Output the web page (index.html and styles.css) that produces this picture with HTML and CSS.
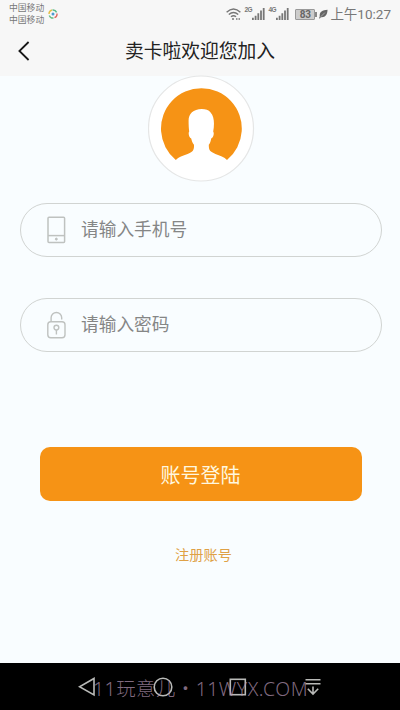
FILE: index.html
```html
<!DOCTYPE html>
<html lang="zh-CN">
<head>
<meta charset="utf-8">
<title>卖卡啦欢迎您加入</title>
<link rel="stylesheet" href="styles.css">
</head>
<body>
<div class="screen">
  <header class="header">
    <div class="status">
      <div class="carriers"><span>中国移动</span><span>中国移动</span></div>
      <svg class="app-dot" width="10" height="10" viewBox="0 0 10 10" fill="none" stroke-width="1.4">
        <path d="M1 5A4 4 0 0 1 4 1" stroke="#e3c04c"/><path d="M4.5 1A4 4 0 0 1 8.6 3.4" stroke="#59b98a"/>
        <path d="M9 4.5A4 4 0 0 1 6.5 8.7" stroke="#df6b62"/><path d="M5.5 9A4 4 0 0 1 1.3 6.4" stroke="#6bbf87"/>
        <circle cx="5" cy="5" r="1.5" fill="#4b9bd0"/>
      </svg>
      <div class="indicators">
        <svg class="wifi" width="15" height="12" viewBox="0 0 15 12" fill="none" stroke="#777" stroke-width="1.4">
          <path d="M.6 4.2Q7.5-2.4 14.4 4.2M2.8 6.6Q7.5 2.2 12.2 6.6M5 8.8Q7.5 6.6 10 8.8"/><path d="M6 11h2M10 11h1.5M12.5 11H14" stroke-width="1.6"/>
        </svg>
        <span class="net">2G</span>
        <svg class="bars" width="13" height="12" viewBox="0 0 13 11" preserveAspectRatio="none" fill="#777"><path d="M0 9h1.8v2H0zM2.7 7h1.8v4H2.7zM5.4 4.8h1.8V11H5.4zM8.1 2.4h1.8V11H8.1zM10.8 0h1.8v11h-1.8z"/></svg>
        <span class="net net-second">4G</span>
        <svg class="bars" width="13" height="12" viewBox="0 0 13 11" preserveAspectRatio="none" fill="#777"><path d="M0 9h1.8v2H0zM2.7 7h1.8v4H2.7zM5.4 4.8h1.8V11H5.4zM8.1 2.4h1.8V11H8.1zM10.8 0h1.8v11h-1.8z"/></svg>
        <span class="battery">83</span>
        <svg class="leaf" width="9" height="10" viewBox="0 0 10 11"><path d="M9.5.8C4 1 .2 3.2.8 8.2L0 10.2l1 .4 1-1.6C7 9.6 9.2 6.5 9.5.8Z" fill="#666"/><path d="M2 8.5 6.5 4" stroke="#ddd" stroke-width=".6"/></svg>
        <span class="clock">上午10:27</span>
      </div>
    </div>
    <div class="titlebar">
      <svg class="back" width="12" height="20" viewBox="0 0 12 20" fill="none" stroke="#171717" stroke-width="1.8"><path d="M10.6 1 1.4 10l9.2 9"/></svg>
      <h1 class="title">卖卡啦欢迎您加入</h1>
    </div>
  </header>

  <main class="content">
    <svg class="avatar" width="107" height="107" viewBox="0 0 107 107">
      <circle cx="53" cy="53.5" r="52.5" fill="#fff" stroke="#e5e6e6" stroke-width="1.2"/>
      <path d="M27.8 84.9A40.4 40.4 0 1 1 79 84.9C76.4 82.2 71.8 80.8 67.4 79C62 76.8 60.7 75.4 60.8 69.8C62.2 67.8 62.8 66 63.2 63.4C65.6 62.6 66.4 58 65.2 56.4C66.4 50 66.6 41.6 62.6 37.4C60.8 34.8 57.4 33.9 53.8 33.9C45 34 40.4 38.8 40.6 46C40.6 50 40.8 53.6 41.2 56.4C40 58 41 62.6 43.2 63.4C43.8 66 44.6 67.8 46 69.8C46.2 75.4 44.8 76.8 39.6 79C35 80.8 30.4 82.2 27.8 84.9Z" fill="#f69315"/>
    </svg>

    <form class="form">
      <label class="field">
        <svg class="field-icon" width="20" height="28" viewBox="0 0 20 28" fill="none" stroke="#bfc2c0" stroke-width="1.5"><rect x="2" y="1.2" width="16.6" height="25.4" rx="1"/><path d="M2 19.6h16.6"/><circle cx="10.3" cy="23.1" r="1" fill="#bfc2c0" stroke-width="1"/></svg>
        <span>请输入手机号</span>
      </label>
      <label class="field">
        <svg class="field-icon" width="20" height="28" viewBox="0 0 20 28" fill="none" stroke="#bfc2c0" stroke-width="1.4"><rect x="1.8" y="10.7" width="17.2" height="16" rx="3"/><path d="M5.1 10.5V6.8a5.3 5.3 0 0 1 10.6 0v1.8"/><circle cx="10.4" cy="16.6" r="2.4"/><path d="M10.4 19v4.5"/></svg>
        <span>请输入密码</span>
      </label>
      <button class="login" type="button">账号登陆</button>
      <a class="register">注册账号</a>
    </form>
  </main>

  <footer class="navbar">
    <svg class="nav-icon" width="18" height="20" viewBox="0 0 18 20"><path d="M16 1.5v16.5L1.5 9.8Z"/></svg>
    <svg class="nav-icon" width="20" height="20" viewBox="0 0 20 20"><circle cx="10" cy="10" r="8.8"/></svg>
    <svg class="nav-icon nav-recent" width="18" height="18" viewBox="0 0 18 18"><rect x="1.3" y="1.3" width="15" height="15.4"/></svg>
    <svg class="nav-icon nav-menu" width="16" height="18" viewBox="0 0 16 18"><path d="M.5 1.7h15M.5 5.7h15M8 8.5v7.3M2.8 10.8 8 16l5.2-5.2"/></svg>
    <div class="watermark">11玩意儿・11WYX.COM</div>
  </footer>
</div>
</body>
</html>
```

FILE: styles.css
```css
* { box-sizing: border-box; }

body {
  margin: 0;
  font-family: Roboto, "Noto Sans CJK SC", sans-serif;
}

.screen {
  width: 400px;
  height: 710px;
  display: flex;
  flex-direction: column;
  overflow: hidden;
  background: #f9fdff;
}

.header {
  height: 76px;
  flex: none;
  background: #f7f7f7;
}

.status {
  height: 28px;
  display: flex;
  padding: 0 9px;
  color: #777;
}

.carriers {
  display: flex;
  flex-direction: column;
  padding-top: 2px;
  font-size: 8.8px;
  line-height: 12px;
}

.app-dot { margin: 9px 0 0 4px; }

.indicators {
  display: flex;
  align-items: center;
  margin-left: auto;
}

.wifi { margin-right: 3px; }

.net {
  width: 8px;
  font-family: "Liberation Sans", sans-serif;
  font-size: 6.5px;
  font-weight: 700;
  letter-spacing: -0.6px;
  line-height: 8px;
  margin-bottom: 8px;
}

.net-second { margin-left: 3px; }

.battery {
  position: relative;
  width: 20px;
  height: 11px;
  margin: 0 4px 0 6px;
  border: 1px solid #999;
  border-radius: 1px;
  background: #ccc;
  color: #666;
  font-size: 10px;
  font-weight: 700;
  line-height: 10px;
  text-align: center;
}

.battery::after {
  content: "";
  position: absolute;
  right: -3px;
  top: 2px;
  width: 2px;
  height: 5px;
  background: #888;
}

.clock {
  margin-left: 2px;
  font-size: 13.5px;
  line-height: 20px;
  white-space: nowrap;
}

.titlebar {
  height: 46px;
  display: grid;
  grid-template-columns: 60px 1fr 60px;
  align-items: center;
}

.back { margin-left: 18px; }

.title {
  margin: 2px 0 0;
  color: #222;
  font-size: 18.8px;
  font-weight: 400;
  line-height: 28px;
  text-align: center;
  white-space: nowrap;
}

.content {
  flex: 1;
  display: flex;
  flex-direction: column;
  align-items: center;
}

.avatar { margin: -1px 0 0 2px; flex: none; }

.form {
  width: 100%;
  display: flex;
  flex-direction: column;
  align-items: center;
  padding-top: 21px;
}

.field {
  width: 362px;
  height: 54px;
  display: flex;
  align-items: center;
  margin: 0 0 41px 1px;
  padding-left: 25px;
  border: 1.5px solid #d1d4d2;
  border-radius: 27px;
  color: #858686;
  font-size: 17.7px;
  line-height: 26px;
}

.field-icon { margin-right: 15.5px; }

.login {
  width: 322px;
  height: 54px;
  margin: 54px 0 0 1px;
  padding: 0;
  border: 0;
  border-radius: 10px;
  background: #f69315;
  color: #fff7df;
  font: inherit;
  font-size: 20px;
}

.register {
  margin: 43px 0 0 7px;
  color: #dfa146;
  font-size: 14.2px;
  line-height: 22px;
}

.navbar {
  position: relative;
  height: 47px;
  flex: none;
  display: flex;
  align-items: center;
  justify-content: space-between;
  padding: 0 78px;
  background: #000;
}

.nav-icon {
  fill: none;
  stroke: #b9bab8;
  stroke-width: 1.6;
}

.nav-recent { margin-right: 1px; }

.nav-menu { margin-right: 1px; }

.watermark {
  position: absolute;
  left: 93px;
  top: 12px;
  color: rgba(178, 148, 178, 0.72);
  font-family: "Noto Sans", "Noto Sans CJK SC", sans-serif;
  font-size: 19.4px;
  font-weight: 300;
  letter-spacing: 0.5px;
  line-height: 28px;
  white-space: nowrap;
}
```
